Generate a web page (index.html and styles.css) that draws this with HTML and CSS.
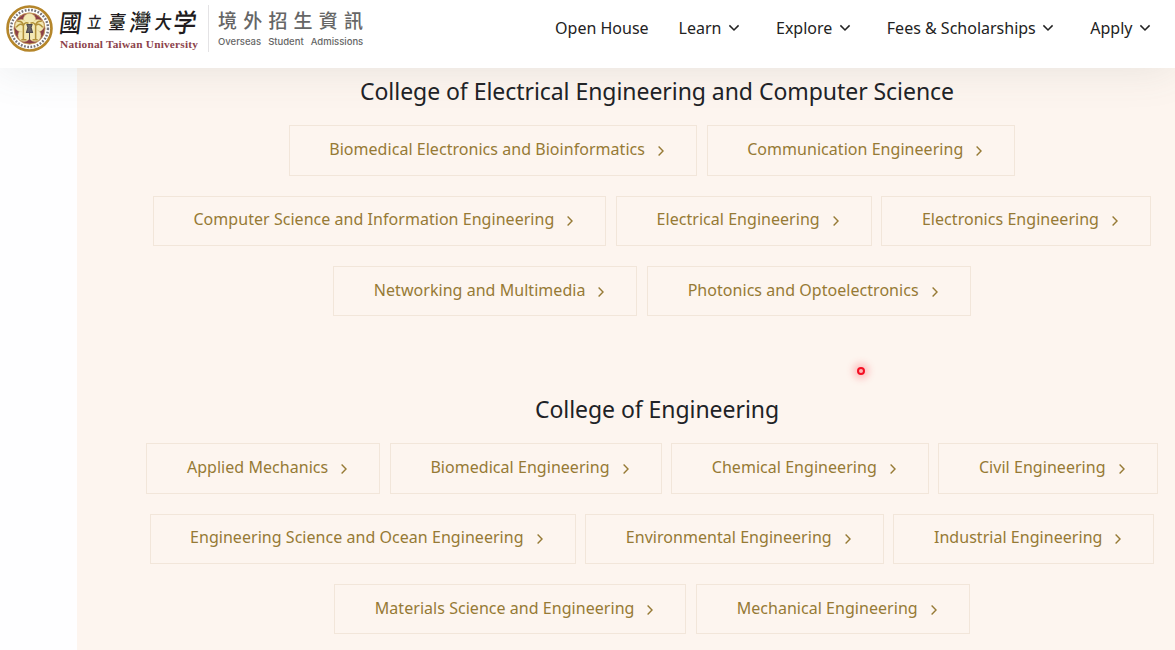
FILE: index.html
```html
<!DOCTYPE html>
<html lang="en">
<head>
<meta charset="utf-8">
<title>NTU Overseas Student Admissions</title>
<link rel="stylesheet" href="styles.css">
</head>
<body>
<svg class="defs" width="0" height="0" aria-hidden="true">
  <symbol id="down" viewBox="0 0 12 8"><path d="M1.4 1.4 6 6 10.6 1.4" fill="none" stroke="currentColor" stroke-width="1.5"/></symbol>
  <symbol id="right" viewBox="0 0 8 12"><path d="M1.6 1.6 6 6 1.6 10.4" fill="none" stroke="currentColor" stroke-width="1.4"/></symbol>
</svg>
<header class="header">
  <div class="brand">
    <svg class="seal" viewBox="0 0 46 46">
      <circle cx="23" cy="23" r="21.5" fill="#fff" stroke="#b5862b" stroke-width="2.6"/>
      <circle cx="23" cy="23" r="18.1" fill="none" stroke="#77747a" stroke-width="2.4" stroke-dasharray="1.7 1.5"/>
      <circle cx="23" cy="23" r="15.3" fill="#8c4048" stroke="#d0ad5b" stroke-width=".8"/>
      <g fill="#f3e9b4" stroke="#d8c178" stroke-width=".5">
        <circle cx="23" cy="14.3" r="6"/><circle cx="31.2" cy="20.2" r="6"/><circle cx="28.2" cy="29.8" r="6"/><circle cx="17.8" cy="29.8" r="6"/><circle cx="14.8" cy="20.2" r="6"/>
      </g>
      <circle cx="23" cy="23" r="8" fill="#f3e9b4"/>
      <g fill="none" stroke="#b1913a" stroke-width="1.5">
        <path d="M17 34V20M29 34V20M17 20q-4-3-7 2M17 20q-1-5-6-4M17 20q2-4 5-2M29 20q4-3 7 2M29 20q1-5 6-4M29 20q-2-4-5-2M15 34h5M26 34h5"/>
      </g>
      <path d="M20.5 19h5l-1 3 1.5 5h-6l1.500-5zM23 26v8" fill="#686469" stroke="#4c484c"/>
    </svg>
    <div class="university">
      <div class="calligraphy"><span class="c1">國</span><span class="c2">立</span><span class="c3">臺</span><span class="c4">灣</span><span class="c5">大</span><span class="c6">学</span></div>
      <div class="latin-name">National Taiwan University</div>
    </div>
    <div class="office">
      <div class="office-zh">境外招生資訊</div>
      <div class="office-en">Overseas Student Admissions</div>
    </div>
  </div>
  <nav class="nav">
    <a class="open">Open House</a>
    <a class="learn">Learn<svg><use href="#down"/></svg></a>
    <a class="explore">Explore<svg><use href="#down"/></svg></a>
    <a class="fees">Fees &amp; Scholarships<svg><use href="#down"/></svg></a>
    <a class="apply">Apply<svg><use href="#down"/></svg></a>
  </nav>
</header>
<main class="panel">
  <section class="college eecs">
    <h2>College of Electrical Engineering and Computer Science</h2>
    <div class="row"><a>Biomedical Electronics and Bioinformatics<svg><use href="#right"/></svg></a><a>Communication Engineering<svg><use href="#right"/></svg></a></div>
    <div class="row"><a>Computer Science and Information Engineering<svg><use href="#right"/></svg></a><a>Electrical Engineering<svg><use href="#right"/></svg></a><a>Electronics Engineering<svg><use href="#right"/></svg></a></div>
    <div class="row"><a>Networking and Multimedia<svg><use href="#right"/></svg></a><a>Photonics and Optoelectronics<svg><use href="#right"/></svg></a></div>
  </section>
  <section class="college">
    <h2>College of Engineering</h2>
    <div class="row"><a>Applied Mechanics<svg><use href="#right"/></svg></a><a>Biomedical Engineering<svg><use href="#right"/></svg></a><a>Chemical Engineering<svg><use href="#right"/></svg></a><a>Civil Engineering<svg><use href="#right"/></svg></a></div>
    <div class="row"><a>Engineering Science and Ocean Engineering<svg><use href="#right"/></svg></a><a>Environmental Engineering<svg><use href="#right"/></svg></a><a>Industrial Engineering<svg><use href="#right"/></svg></a></div>
    <div class="row"><a>Materials Science and Engineering<svg><use href="#right"/></svg></a><a>Mechanical Engineering<svg><use href="#right"/></svg></a></div>
  </section>
</main>
<div class="pointer"></div>
</body>
</html>
```
FILE: styles.css
```css
* { box-sizing: border-box; }
body { margin: 0; width: 1175px; height: 650px; overflow: hidden; background: #fefeff; font-family: "Noto Sans", "Noto Sans CJK TC", sans-serif; font-size: 16px; }
.defs { display: block; height: 0; }
.header { position: relative; height: 68px; padding: 0 24px 0 6px; display: flex; justify-content: space-between; background: #fff; box-shadow: 0 0 44px rgba(80,100,100,.13); clip-path: inset(0 0 -60px 0); }
.brand { display: flex; }
.seal { width: 47px; height: 47px; margin-top: 5px; }
.university { width: 156px; height: 47px; margin-top: 5px; padding-left: 7px; border-right: 1px solid #e4e3e5; }
.calligraphy { height: 32px; display: flex; align-items: center; color: #211c20; font-family: "Noto Sans CJK JP", "Noto Sans CJK TC", sans-serif; font-weight: 500; line-height: 32px; transform: skewX(-7deg) scaleY(1.12); }
.calligraphy span { display: block; text-align: center; white-space: nowrap; }
.c1 { width: 22px; font-size: 22px; }
.c2 { width: 25px; font-size: 14px; }
.c3 { width: 21px; font-size: 17px; }
.c4 { width: 25px; font-size: 21px; }
.c5 { width: 21px; font-size: 17px; }
.c6 { width: 23px; font-size: 23px; }
.latin-name { color: #8c434b; font: bold 11.3px/15px "Liberation Serif", serif; white-space: nowrap; letter-spacing: .22px; }
.office { padding: 7px 0 0 9px; color: #666; white-space: nowrap; }
.office-zh { font: 500 19px/25px "Noto Sans CJK TC", sans-serif; letter-spacing: 6.2px; }
.office-en { margin-top: 2px; font: 500 9.5px/15px Inter, sans-serif; word-spacing: 4.5px; }
.nav { display: flex; align-items: flex-start; padding-top: 17px; line-height: 22px; color: #222; }
.nav a { display: flex; align-items: center; white-space: nowrap; }
.nav svg { width: 12px; height: 8px; margin-left: 6.5px; }
.learn { margin-left: 30px; }
.explore, .fees, .apply { margin-left: 36px; }
.panel { height: 582px; margin-left: 77px; padding-left: 62px; background: #fdf5ef; }
.college { padding-top: 7px; }
.eecs { height: 318px; }
h2 { margin: 0; height: 50.300px; text-align: center; color: #202226; font: 400 23px/33px "Noto Sans", sans-serif; letter-spacing: -.05px; white-space: nowrap; }
.row { height: 50.600px; margin-bottom: 19.700px; padding-right: 10px; display: flex; justify-content: center; gap: 9.700px; }
.row:last-child { margin-bottom: 0; }
.row a { display: flex; align-items: center; height: 100%; padding: 0 31px 3px 39.500px; border: 1px solid #f2e6da; color: #967a35; letter-spacing: .04px; white-space: nowrap; }
.row svg { width: 8px; height: 12px; margin: 4px 0 0 12px; }
.pointer { position: absolute; left: 857px; top: 367px; width: 8px; height: 8px; border: 2.500px solid #f40f24; border-radius: 50%; background: #ffb4b4; box-shadow: 0 0 7px 4px rgba(255,60,75,.28); }
```
